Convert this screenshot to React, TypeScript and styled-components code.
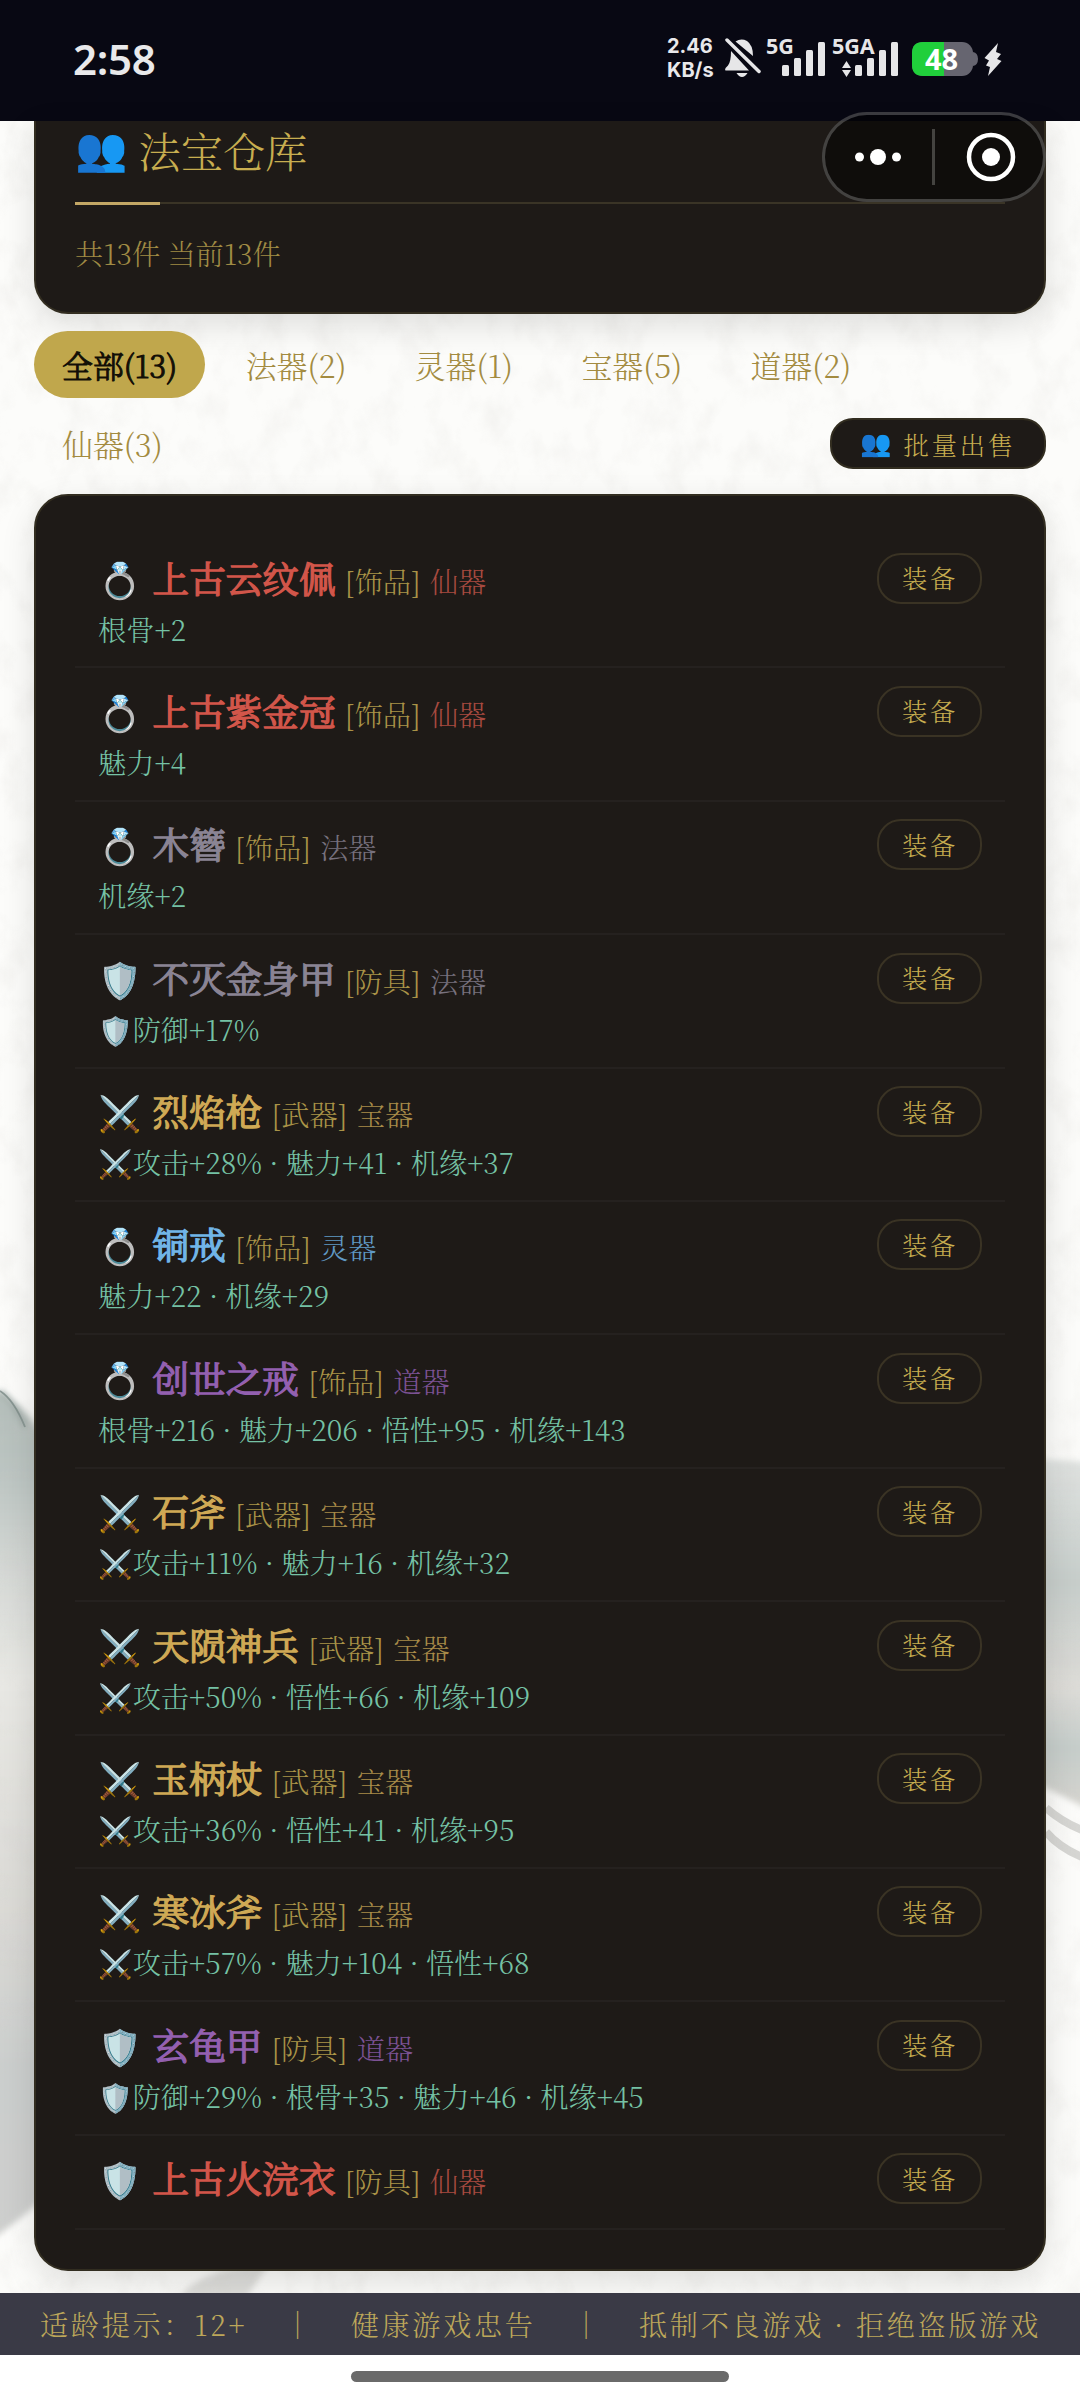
import React from "react";
import styled, { createGlobalStyle } from "styled-components";

const serif = `"Noto Serif CJK SC", "Source Han Serif SC", "Liberation Serif", "Noto Sans CJK SC", serif`;

const Global = createGlobalStyle`
  * { box-sizing: border-box; }
  body { margin: 0; background: #fff; font-family: ${serif}; font-weight: 300; }
`;

const Page = styled.div`
  position: relative;
  width: 1080px;
  height: 2400px;
  overflow: hidden;
  display: flex;
  flex-direction: column;
`;

const Backdrop = styled.svg`
  position: absolute;
  inset: 0;
  z-index: -1;
`;

const StatusBar = styled.header`
  height: 121px;
  flex: none;
  background: #080813;
  color: #e9e9eb;
  display: flex;
  justify-content: space-between;
  align-items: flex-start;
  padding: 24px 71px 0 73px;
  font-family: "Noto Sans", Inter, sans-serif;
`;

const Clock = styled.div`
  padding-top: 10px;
  font-size: 42px;
  font-weight: 600;
  line-height: 50px;
  letter-spacing: -0.3px;
`;

const StatusIcons = styled.div`
  display: flex;
  align-items: flex-start;
`;

const NetSpeed = styled.div`
  width: 58px;
  padding-top: 10px;
  font-family: Inter, "Noto Sans", sans-serif;
  font-size: 20px;
  line-height: 24px;
  font-weight: 700;
  white-space: nowrap;
`;

const Glyphs = styled.svg`
  display: block;
`;

const Capsule = styled.div`
  position: absolute;
  left: 822px;
  top: 112px;
  width: 224px;
  height: 90px;
  border: 3px solid rgba(255, 255, 255, 0.22);
  border-radius: 45px;
  background: rgba(0, 0, 0, 0.5);
  display: flex;
`;

const Content = styled.main`
  flex: 1;
  min-height: 0;
  padding: 0 34px;
`;

const Card = styled.section`
  background: #1e1a17;
  border: 2px solid #322d20;
  box-shadow: 0 11px 34px rgba(0, 0, 0, 0.12);
`;

const HeadCard = styled(Card)`
  height: 193px;
  border-top: 0;
  border-radius: 0 0 34px 34px;
  padding: 0 39px;
`;

const Title = styled.h1`
  margin: 0;
  height: 83px;
  display: flex;
  align-items: center;
  gap: 11px;
  padding-bottom: 25px;
  border-bottom: 2px solid #3a3426;
  font-size: 42.2px;
  font-weight: 300;
  color: #c8ae50;
`;

const Accent = styled.div`
  width: 85px;
  height: 3px;
  margin-top: -2px;
  background: #c3a765;
`;

const Summary = styled.p`
  margin: 28px 0 0;
  font-size: 28.2px;
  line-height: 40px;
  color: #a08b44;
`;

const Filters = styled.div`
  display: flex;
  flex-direction: column;
  gap: 12px;
  margin-top: 17px;
`;

const FilterLine = styled.nav`
  display: flex;
  align-items: center;
  gap: 12.3px;
`;

const Tab = styled.button<{ $active?: boolean }>`
  height: 67px;
  padding: 0 28px;
  border: 0;
  border-radius: 34px;
  background: ${(p) => (p.$active ? "#c0a74c" : "transparent")};
  color: ${(p) => (p.$active ? "#120e06" : "#a38b40")};
  font: 300 30.9px ${serif};
  -webkit-text-stroke: ${(p) => (p.$active ? "1px #120e06" : "0")};
`;

const SellButton = styled.button`
  width: 216px;
  height: 51px;
  margin-left: auto;
  padding: 0;
  display: flex;
  align-items: center;
  justify-content: center;
  gap: 12px;
  border: 2px solid #322d20;
  border-radius: 23px;
  background: #1e1a17;
  color: #c8ae50;
  font: 300 25.3px ${serif};
  letter-spacing: 2.8px;
`;

const ListCard = styled(Card)`
  height: 1777px;
  margin-top: 17px;
  border-radius: 34px;
  padding: 39px 39px 0;
`;

const Row = styled.article<{ $short?: boolean }>`
  height: ${(p) => (p.$short ? "94px" : "133.4px")};
  padding: 17.5px 23px 0;
  display: flex;
  justify-content: space-between;
  align-items: flex-start;
  border-bottom: 2px solid #25211f;
`;

const Info = styled.div`
  white-space: nowrap;
`;

const Heading = styled.div`
  display: flex;
  align-items: baseline;
  height: 50px;
  line-height: 48px;
`;

const Icon = styled.span<{ $size: number }>`
  font-size: ${(p) => p.$size}px;
  font-family: "Noto Color Emoji", sans-serif;
  letter-spacing: 0;
`;

const Name = styled.span<{ $color: string }>`
  margin-left: 11px;
  font-size: 36.6px;
  font-weight: 400;
  -webkit-text-stroke: 1.3px ${(p) => p.$color};
  color: ${(p) => p.$color};
`;

const Tag = styled.span<{ $color: string }>`
  margin-left: 9.5px;
  font-size: 28.2px;
  color: ${(p) => p.$color};
`;

const Stats = styled.div`
  display: flex;
  align-items: baseline;
  height: 44px;
  margin-top: 4px;
  line-height: 44px;
  font-size: 28.2px;
  color: #75c2a5;
`;

const Equip = styled.button`
  width: 105px;
  height: 51px;
  padding: 0 0 2px 1px;
  border: 2px solid #3a3324;
  border-radius: 24px;
  background: transparent;
  color: #c8ae50;
  font: 300 25.3px ${serif};
  letter-spacing: 2.8px;
`;

const Notice = styled.footer`
  height: 62px;
  flex: none;
  background: #3a3a46;
  color: #bda75a;
  display: flex;
  align-items: center;
  justify-content: space-between;
  padding: 0 39px 1px 40px;
  font-size: 28.1px;
  letter-spacing: 2.75px;
  white-space: nowrap;
`;

const NavArea = styled.div`
  height: 45px;
  flex: none;
  background: #fff;
  display: flex;
  justify-content: center;
  padding-top: 16px;
`;

const NavPill = styled.div`
  width: 378px;
  height: 11px;
  border-radius: 6px;
  background: #6a6a6a;
`;

const tiers = {
  仙器: ["#d2564a", "#a84a40"],
  法器: ["#8a8494", "#77717e"],
  宝器: ["#cfa955", "#a88b49"],
  灵器: ["#71b5e8", "#6099c4"],
  道器: ["#9360b0", "#7c5294"],
} as const;

type Item = { icon: string; name: string; kind: string; tier: keyof typeof tiers; statIcon?: string; stats?: string };

const items: Item[] = [
  { icon: "💍", name: "上古云纹佩", kind: "饰品", tier: "仙器", stats: "根骨+2" },
  { icon: "💍", name: "上古紫金冠", kind: "饰品", tier: "仙器", stats: "魅力+4" },
  { icon: "💍", name: "木簪", kind: "饰品", tier: "法器", stats: "机缘+2" },
  { icon: "🛡️", name: "不灭金身甲", kind: "防具", tier: "法器", statIcon: "🛡️", stats: "防御+17%" },
  { icon: "⚔️", name: "烈焰枪", kind: "武器", tier: "宝器", statIcon: "⚔️", stats: "攻击+28% · 魅力+41 · 机缘+37" },
  { icon: "💍", name: "铜戒", kind: "饰品", tier: "灵器", stats: "魅力+22 · 机缘+29" },
  { icon: "💍", name: "创世之戒", kind: "饰品", tier: "道器", stats: "根骨+216 · 魅力+206 · 悟性+95 · 机缘+143" },
  { icon: "⚔️", name: "石斧", kind: "武器", tier: "宝器", statIcon: "⚔️", stats: "攻击+11% · 魅力+16 · 机缘+32" },
  { icon: "⚔️", name: "天陨神兵", kind: "武器", tier: "宝器", statIcon: "⚔️", stats: "攻击+50% · 悟性+66 · 机缘+109" },
  { icon: "⚔️", name: "玉柄杖", kind: "武器", tier: "宝器", statIcon: "⚔️", stats: "攻击+36% · 悟性+41 · 机缘+95" },
  { icon: "⚔️", name: "寒冰斧", kind: "武器", tier: "宝器", statIcon: "⚔️", stats: "攻击+57% · 魅力+104 · 悟性+68" },
  { icon: "🛡️", name: "玄龟甲", kind: "防具", tier: "道器", statIcon: "🛡️", stats: "防御+29% · 根骨+35 · 魅力+46 · 机缘+45" },
  { icon: "🛡️", name: "上古火浣衣", kind: "防具", tier: "仙器" },
];

const tabs = ["全部(13)", "法器(2)", "灵器(1)", "宝器(5)", "道器(2)"];

function PaperBackdrop() {
  return (
    <Backdrop width="1080" height="2400" viewBox="0 0 1080 2400">
      <defs>
        <filter id="paper" x="0" y="0" width="100%" height="100%">
          <feTurbulence type="fractalNoise" baseFrequency="0.035 0.025" numOctaves="4" seed="7" />
          <feColorMatrix values="0 0 0 0 .62  0 0 0 0 .60  0 0 0 0 .57  .9 0 0 0 -.4" />
        </filter>
        <filter id="soft" x="-20%" y="-20%" width="140%" height="140%">
          <feGaussianBlur stdDeviation="3" />
        </filter>
        <linearGradient id="inkL" x1="0" y1="0" x2="0" y2="1">
          <stop offset="0" stopColor="#b3bdb9" />
          <stop offset=".1" stopColor="#bcc5c2" />
          <stop offset=".22" stopColor="#d6d9d6" />
          <stop offset=".34" stopColor="#e8e8e4" />
          <stop offset=".62" stopColor="#dad9d5" />
          <stop offset=".8" stopColor="#cbcecd" />
          <stop offset="1" stopColor="#cecfcd" />
        </linearGradient>
        <linearGradient id="inkR" x1="0" y1="0" x2="0" y2="1">
          <stop offset="0" stopColor="#dfe2e0" />
          <stop offset=".35" stopColor="#c6cdca" />
          <stop offset=".65" stopColor="#dddcd8" />
          <stop offset=".82" stopColor="#c5cdca" />
          <stop offset="1" stopColor="#d6d4cf" />
        </linearGradient>
      </defs>
      <rect width="1080" height="2400" fill="#fcfcfa" />
      <g filter="url(#soft)">
        <path d="M-10 1390Q22 1396 48 1446L60 2180Q30 2215 -10 2240Z" fill="url(#inkL)" />
        <path d="M1040 1459L1090 1462V1810L1040 1785Z" fill="url(#inkR)" />
        <path d="M180 2300Q190 2272 270 2262L245 2300Z" fill="#dededb" />
        <path d="M0 1391Q14 1400 25 1427" fill="none" stroke="#8b9794" strokeWidth="3" />
      </g>
      <path d="M0 1391Q14 1400 25 1427" fill="none" stroke="#7b8986" strokeWidth="1.8" opacity=".8" />
      <path d="M1046 1808Q1062 1822 1082 1830M1046 1832Q1060 1848 1082 1857" fill="none" stroke="#d6d6d3" strokeWidth="8" />
      <rect width="1080" height="2400" filter="url(#paper)" opacity=".4" />
    </Backdrop>
  );
}

function StatusGlyphs() {
  return (
    <Glyphs width="284" height="58" viewBox="725 24 284 58" fill="#e6e6e8">
      <path d="M735.5 41.5Q741 38 747 41Q753 45 753 56ZM731 51L749 70.5H725.5Q724 69 728 65.5Q731 62 731 51ZM736.5 73H747.5Q745 77 742 77Q739 77 736.5 73Z" />
      <path d="M727 40L759 71.5" stroke="#e6e6e8" strokeWidth="3.5" strokeLinecap="round" />
      <text x="766" y="53.5" fontSize="21.5" fontWeight="700">5G</text>
      <text x="832" y="53.5" fontSize="21.5" fontWeight="700">5GA</text>
      {[782, 855].map((x) =>
        [65, 58, 50, 42].map((y, i) => (
          <rect key={`${x}-${i}`} x={x + i * 12} y={y} width="7" height={76 - y} rx="1.5" />
        ))
      )}
      <path d="M842 68L846.5 61L851 68ZM842 70L846.5 77L851 70Z" />
      <rect x="912" y="42" width="61" height="34" rx="11" fill="#666570" />
      <path d="M944 42V76H923Q912 76 912 65V53Q912 42 923 42Z" fill="#20cf3b" />
      <path d="M973 52Q978 53 978 59Q978 65 973 66Z" fill="#666570" />
      <text x="925" y="69.5" fontSize="29" fontWeight="700" fill="#fff">48</text>
      <path d="M998 43L984.5 58L989 60.5L986 65.5L990 67L988 76L1001.5 61L997 59L1001 54L996 52Z" />
    </Glyphs>
  );
}

export default function App() {
  return (
    <Page>
      <Global />
      <PaperBackdrop />
      <StatusBar>
        <Clock>2:58</Clock>
        <StatusIcons>
          <NetSpeed>
            2.46
            <br />
            KB/s
          </NetSpeed>
          <StatusGlyphs />
        </StatusIcons>
      </StatusBar>
      <Content>
        <HeadCard>
          <Title>
            <Icon $size={42.2}>👥</Icon>法宝仓库
          </Title>
          <Accent />
          <Summary>共13件 当前13件</Summary>
        </HeadCard>
        <Filters>
          <FilterLine>
            {tabs.map((t, i) => (
              <Tab key={t} $active={i === 0}>{t}</Tab>
            ))}
          </FilterLine>
          <FilterLine>
            <Tab>仙器(3)</Tab>
            <SellButton>
              <Icon $size={25.3}>👥</Icon>批量出售
            </SellButton>
          </FilterLine>
        </Filters>
        <ListCard>
          {items.map((it) => (
            <Row key={it.name} $short={!it.stats}>
              <Info>
                <Heading>
                  <Icon $size={35}>{it.icon}</Icon>
                  <Name $color={tiers[it.tier][0]}>{it.name}</Name>
                  <Tag $color="#a99347">[{it.kind}]</Tag>
                  <Tag $color={tiers[it.tier][1]}>{it.tier}</Tag>
                </Heading>
                {it.stats && (
                  <Stats>
                    {it.statIcon && <Icon $size={27.8}>{it.statIcon}</Icon>}
                    {it.stats}
                  </Stats>
                )}
              </Info>
              <Equip>装备</Equip>
            </Row>
          ))}
        </ListCard>
      </Content>
      <Notice>
        <span>适龄提示：12+</span>
        <span>｜</span>
        <span>健康游戏忠告</span>
        <span>｜</span>
        <span>抵制不良游戏 · 拒绝盗版游戏</span>
      </Notice>
      <NavArea>
        <NavPill />
      </NavArea>
      <Capsule>
        <svg width="218" height="84" viewBox="825 115 218 84" fill="#fff">
          <circle cx="859.5" cy="157" r="4.5" />
          <circle cx="878" cy="157" r="8" />
          <circle cx="896.5" cy="157" r="4.5" />
          <rect x="932" y="129" width="3" height="56" fill="#444340" />
          <circle cx="991" cy="157" r="22" fill="none" stroke="#fff" strokeWidth="4.5" />
          <circle cx="991" cy="157" r="9" />
        </svg>
      </Capsule>
    </Page>
  );
}
